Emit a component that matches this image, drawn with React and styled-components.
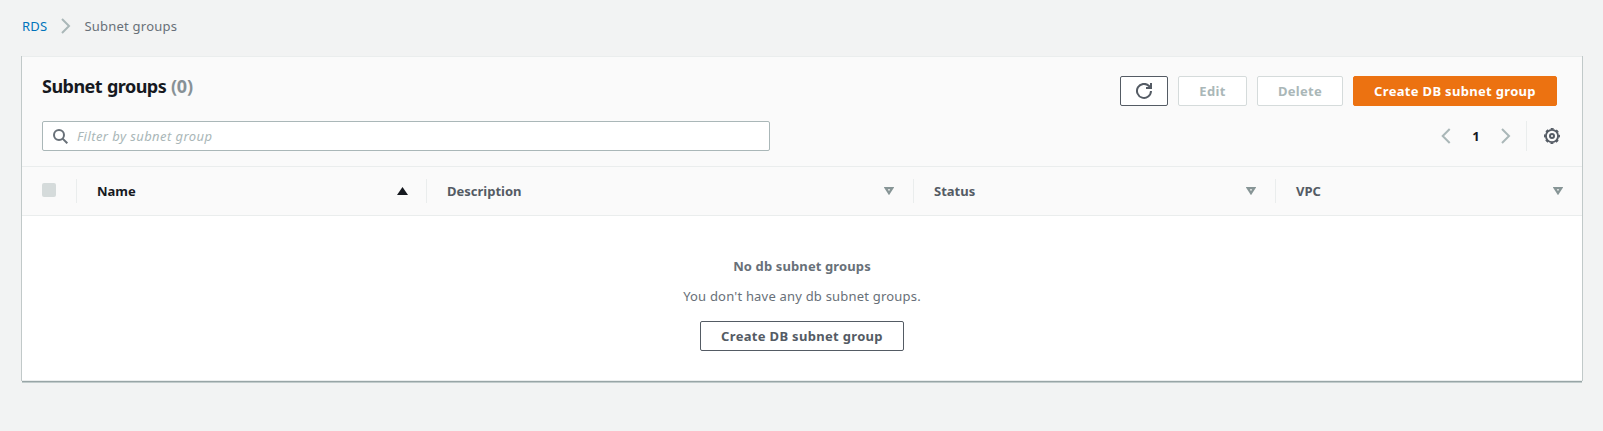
import React from 'react';
import styled, { createGlobalStyle } from 'styled-components';

const Global = createGlobalStyle`
  *, *::before, *::after { box-sizing: border-box; }
  body {
    margin: 0;
    background: #f2f3f3;
    color: #16191f;
    font-family: "Noto Sans", "Open Sans", sans-serif;
    font-size: 13px;
    line-height: 20px;
  }
  svg { display: block; flex: none; }
`;

const Page = styled.main`
  min-height: 431px;
  padding: 16px 21px 0 22px;
`;

const Breadcrumbs = styled.nav`
  display: flex;
  align-items: center;
  height: 20px;
  margin-bottom: 20px;
  color: #687078;
  letter-spacing: 0.23px;
  svg { margin: 0 13px 0 14px; }
`;

const Crumb = styled.a`
  color: #0073bb;
  text-decoration: none;
`;

const Card = styled.section`
  height: 325px;
  background: #fff;
  border-top: 1px solid #eaeded;
  border-bottom: 1px solid #eaeded;
  box-shadow: 0 1px 0 0 #98a5a6, -1px 0 0 0 #c1c9c9, 1px 0 0 0 #c1c9c9, 0 2px 0 0 #c1cbcb;
`;

const Header = styled.header`
  height: 110px;
  padding: 19px 20px 0;
  background: #fafafa;
  border-bottom: 1px solid #eaeded;
`;

const TitleRow = styled.div`
  display: flex;
  justify-content: space-between;
  height: 45px;
  padding-right: 5px;
`;

const Title = styled.h2`
  margin: -1px 0 0;
  font-size: 18px;
  line-height: 22px;
  font-weight: 700;
  letter-spacing: -0.52px;
  word-spacing: 0.6px;
`;

const Count = styled.span`
  color: #879196;
  letter-spacing: -0.2px;
`;

const Actions = styled.div`
  display: flex;
  gap: 10px;
`;

const tones = {
  normal: ['#fff', '#545b64', '#545b64'],
  disabled: ['#fff', '#d5dbdb', '#aab7b8'],
  primary: ['#ec7211', '#ec7211', '#fff'],
};

const Button = styled.button`
  display: inline-flex;
  align-items: center;
  justify-content: center;
  width: ${(p) => p.$width}px;
  height: 30px;
  padding: 0;
  background: ${(p) => tones[p.$tone][0]};
  border: 1px solid ${(p) => tones[p.$tone][1]};
  border-radius: 2px;
  color: ${(p) => tones[p.$tone][2]};
  font: 700 13px/20px "Noto Sans", sans-serif;
  letter-spacing: 0.32px;
  white-space: nowrap;
`;

const ToolRow = styled.div`
  display: flex;
  align-items: center;
  justify-content: space-between;
`;

const Search = styled.label`
  display: flex;
  align-items: center;
  gap: 9px;
  width: 728px;
  height: 30px;
  padding-left: 10px;
  background: #fff;
  border: 1px solid #aab7b8;
  border-radius: 2px;
`;

const SearchInput = styled.input`
  flex: 1;
  padding: 0;
  border: 0;
  outline: 0;
  background: transparent;
  font: 13px/20px "Noto Sans", sans-serif;
  letter-spacing: 0.42px;
  &::placeholder { color: #aab7b8; font-style: italic; opacity: 1; }
`;

const Pager = styled.div`
  display: flex;
  align-items: center;
  height: 30px;
  padding-right: 2px;
`;

const PageNumber = styled.span`
  width: 50px;
  text-align: center;
  font-weight: 700;
`;

const Settings = styled.span`
  display: flex;
  align-items: center;
  height: 30px;
  margin-left: 15px;
  padding-left: 17px;
  border-left: 1px solid #eaeded;
`;

const Columns = styled.div`
  display: grid;
  grid-template-columns: 54px 350px 487px 362px 1fr;
  align-items: center;
  height: 49px;
  background: #fafafa;
  border-bottom: 1px solid #eaeded;
`;

const Column = styled.div`
  display: flex;
  align-items: center;
  justify-content: space-between;
  height: 24px;
  padding: 0 ${(p) => (p.$active ? 18 : 19)}px 0 20px;
  border-left: ${(p) => (p.$first ? 0 : '1px solid #eaeded')};
  color: ${(p) => (p.$active ? '#16191f' : '#545b64')};
  font-weight: 700;
`;

const Check = styled.span`
  width: 14px;
  height: 14px;
  margin-top: -2px;
  background: #d5dbdb;
  border-radius: 2px;
`;

const Empty = styled.div`
  display: flex;
  flex-direction: column;
  align-items: center;
  gap: 10px;
  padding-top: 40px;
  color: #687078;
  strong { letter-spacing: 0.12px; }
  span { letter-spacing: 0.2px; }
  button { margin-top: 5px; }
`;

const Chevron = ({ left }) => (
  <svg width="10" height="16" viewBox="0 0 10 16" fill="none" stroke="#aab7b8" strokeWidth="2">
    <path d={left ? 'M8.7 1 1.7 8l7 7' : 'M1 1l7 7-7 7'} />
  </svg>
);

const SortIcon = ({ up }) =>
  up ? (
    <svg width="11" height="8" viewBox="0 0 11 8"><path d="M5.5 0L11 8H0z" fill="#16191f" /></svg>
  ) : (
    <svg width="10" height="8" viewBox="0 0 10 8" fill="none" stroke="#879596" strokeWidth="2.2">
      <path d="M1.7 1.1h6.600L5 6.200z" />
    </svg>
  );

const SearchIcon = () => (
  <svg width="15" height="15" viewBox="0 0 15 15" fill="none" stroke="#687078" strokeWidth="2">
    <circle cx="6" cy="6" r="5" /><path d="M9.6 9.6l4.7 4.7" />
  </svg>
);

const RefreshIcon = () => (
  <svg width="16" height="16" viewBox="0 0 16 16" fill="none" stroke="#545b64" strokeWidth="2">
    <path d="M15 8a7 7 0 1 1-2-5l2 2" />
    <path d="M15 0v5h-5" />
  </svg>
);

const GearIcon = () => (
  <svg width="16" height="16" viewBox="0 0 16 16" fill="none" stroke="#545b64" strokeWidth="2">
    <circle cx="8" cy="8" r="6.1" strokeWidth="1.900" />
    <circle cx="8" cy="8" r="7.3" strokeWidth="1.4" strokeDasharray="3 2.733" strokeDashoffset="1.5" />
    <circle cx="8" cy="8" r="2" />
  </svg>
);

export default function App() {
  return (
    <>
      <Global />
      <Page>
        <Breadcrumbs>
          <Crumb href="#">RDS</Crumb>
          <Chevron />
          <span>Subnet groups</span>
        </Breadcrumbs>
        <Card>
          <Header>
            <TitleRow>
              <Title>Subnet groups <Count>(0)</Count></Title>
              <Actions>
                <Button $tone="normal" $width={48} aria-label="Refresh"><RefreshIcon /></Button>
                <Button $tone="disabled" $width={69} disabled>Edit</Button>
                <Button $tone="disabled" $width={86} disabled>Delete</Button>
                <Button $tone="primary" $width={204}>Create DB subnet group</Button>
              </Actions>
            </TitleRow>
            <ToolRow>
              <Search>
                <SearchIcon />
                <SearchInput placeholder="Filter by subnet group" />
              </Search>
              <Pager>
                <Chevron left />
                <PageNumber>1</PageNumber>
                <Chevron />
                <Settings><GearIcon /></Settings>
              </Pager>
            </ToolRow>
          </Header>
          <Columns>
            <Column $first><Check /></Column>
            <Column $active>Name<SortIcon up /></Column>
            <Column>Description<SortIcon /></Column>
            <Column>Status<SortIcon /></Column>
            <Column>VPC<SortIcon /></Column>
          </Columns>
          <Empty>
            <strong>No db subnet groups</strong>
            <span>You don't have any db subnet groups.</span>
            <Button $tone="normal" $width={204}>Create DB subnet group</Button>
          </Empty>
        </Card>
      </Page>
    </>
  );
}
